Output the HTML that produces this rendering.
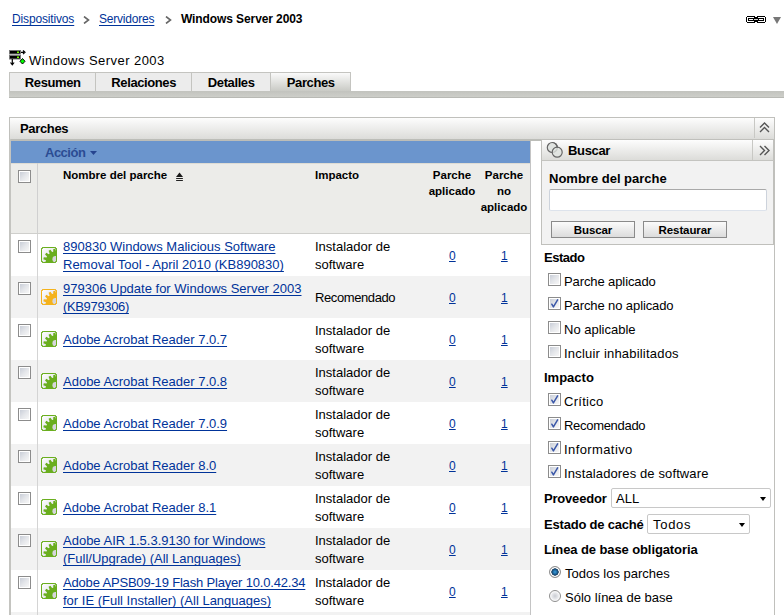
<!DOCTYPE html>
<html><head><meta charset="utf-8">
<style>
*{margin:0;padding:0;box-sizing:border-box}
html,body{width:784px;height:615px;overflow:hidden;background:#fff}
body{position:relative;font-family:"Liberation Sans",sans-serif;font-size:13px;color:#000}
.a{position:absolute}
.t{position:absolute;white-space:nowrap;line-height:18px}
.lnk{color:#003399;text-decoration:underline;text-underline-offset:2px;text-decoration-skip-ink:none}
.b{font-weight:bold}
/* tabs */
.tab{position:absolute;top:72px;height:19px;background:#ececec;border-top:1px solid #c4c4c0;border-right:1px solid #c4c4c0;font-weight:bold;text-align:center;line-height:18px;letter-spacing:-0.4px;padding-left:0.4px;padding-top:1px}
.cb{position:absolute;width:13px;height:13px;border:1px solid #8c8c8c;background:#fff}
.cb::before{content:"";position:absolute;left:1px;top:1px;width:9px;height:9px;background:linear-gradient(135deg,#c9ced8 0%,#e4e6ea 50%,#f7f7f7 100%)}
.cb svg{position:absolute;left:0;top:0}
.row{position:absolute;left:11px;width:519px;height:42px}
.row.g{background:#f2f2f2}
.row .cb{left:7px;top:6px}
.row .ic{position:absolute;left:30px;top:13px;width:16px;height:16px}
.row .nm{position:absolute;left:52px;width:260px;top:1px;height:42px;text-underline-offset:2px;text-decoration-skip-ink:none;display:flex;align-items:center;line-height:18px;color:#003399;text-decoration:underline}
.row .im{position:absolute;left:304px;width:100px;top:1px;height:42px;display:flex;align-items:center;line-height:18px}
.row .n0{position:absolute;left:438px;top:13px;text-underline-offset:1px;font-size:12px;line-height:18px;color:#003399;text-decoration:underline}
.row .n1{position:absolute;left:490px;top:13px;text-underline-offset:1px;font-size:12px;line-height:18px;color:#003399;text-decoration:underline}
.vline{position:absolute;left:26px;top:0;width:1px;height:42px;background:#d0d0d0}
.btn{position:absolute;height:17px;border:1px solid #8a8a8a;background:linear-gradient(#fbfbfb,#dcdcdc);font-weight:bold;font-size:11.5px;text-align:center;line-height:17px;letter-spacing:-0.1px}
.sel{position:absolute;height:20px;border:1px solid #c8c8c8;border-radius:2px;background:#fff;line-height:18px;padding-left:4px;padding-top:1px;font-size:13px}
.sel::after{content:"";position:absolute;right:4px;top:8px;border-left:3.5px solid transparent;border-right:3.5px solid transparent;border-top:4px solid #000}
.rad{position:absolute;width:12px;height:12px;border-radius:50%;border:1px solid #8e8e8e;background:radial-gradient(circle at 50% 50%,#c9ccd2 0,#e6e7ea 3px,#fff 5px)}
.rad.on{background:radial-gradient(circle at 50% 50%,#3ba0e0 0,#1a5c90 2.4px,#173a5a 3.4px,#fff 3.9px,#fff 4.5px,#c8c8c8 5px)}
</style></head><body>
<svg width="0" height="0" style="position:absolute">
<defs>
<linearGradient id="gw" x1="0" y1="0" x2="1" y2="1"><stop offset="0" stop-color="#fff"/><stop offset="1" stop-color="#d8d8e0"/></linearGradient>
<clipPath id="gclip"><rect x="1" y="1" width="14" height="14" rx="1.5"/></clipPath>
<symbol id="gear-g" viewBox="0 0 16 16"><rect x="0.5" y="0.5" width="15" height="15" rx="2" fill="url(#gw)" stroke="#6aae1e"/><g clip-path="url(#gclip)"><path d="M12.24 4.67 L12.30 1.90 L14.46 1.70 L15.03 4.41 L16.23 4.56 L17.42 2.05 L19.46 2.75 L18.88 5.46 L19.92 6.08 L22.03 4.27 L23.61 5.74 L21.98 7.98 L22.67 8.96 L25.33 8.17 L26.18 10.16 L23.78 11.54 L24.01 12.72 L26.77 13.08 L26.74 15.24 L23.98 15.53 L23.71 16.70 L26.08 18.15 L25.17 20.11 L22.54 19.25 L21.82 20.22 L23.39 22.50 L21.76 23.93 L19.71 22.07 L18.65 22.65 L19.16 25.38 L17.10 26.02 L15.98 23.49 L14.77 23.60 L14.13 26.29 L11.98 26.04 L11.99 23.27 L10.85 22.88 L9.16 25.08 L7.31 23.98 L8.44 21.44 L7.55 20.63 L5.12 21.95 L3.87 20.19 L5.93 18.33 L5.46 17.23 L2.69 17.45 L2.27 15.33 L4.91 14.48 L4.93 13.27 L2.31 12.35 L2.79 10.24 L5.55 10.53 L6.05 9.44 L4.04 7.53 L5.33 5.80 L7.73 7.19 L8.64 6.40 L7.57 3.84 L9.46 2.78 L11.08 5.03Z" fill="#6aae1e"/><circle cx="14.6" cy="12.2" r="3.2" fill="#d6d6dc"/></g><rect x="0.5" y="0.5" width="15" height="15" rx="2" fill="none" stroke="#6aae1e"/></symbol>
<symbol id="gear-y" viewBox="0 0 16 16"><rect x="0.5" y="0.5" width="15" height="15" rx="2" fill="url(#gw)" stroke="#f4b21c"/><g clip-path="url(#gclip)"><path d="M12.24 4.67 L12.30 1.90 L14.46 1.70 L15.03 4.41 L16.23 4.56 L17.42 2.05 L19.46 2.75 L18.88 5.46 L19.92 6.08 L22.03 4.27 L23.61 5.74 L21.98 7.98 L22.67 8.96 L25.33 8.17 L26.18 10.16 L23.78 11.54 L24.01 12.72 L26.77 13.08 L26.74 15.24 L23.98 15.53 L23.71 16.70 L26.08 18.15 L25.17 20.11 L22.54 19.25 L21.82 20.22 L23.39 22.50 L21.76 23.93 L19.71 22.07 L18.65 22.65 L19.16 25.38 L17.10 26.02 L15.98 23.49 L14.77 23.60 L14.13 26.29 L11.98 26.04 L11.99 23.27 L10.85 22.88 L9.16 25.08 L7.31 23.98 L8.44 21.44 L7.55 20.63 L5.12 21.95 L3.87 20.19 L5.93 18.33 L5.46 17.23 L2.69 17.45 L2.27 15.33 L4.91 14.48 L4.93 13.27 L2.31 12.35 L2.79 10.24 L5.55 10.53 L6.05 9.44 L4.04 7.53 L5.33 5.80 L7.73 7.19 L8.64 6.40 L7.57 3.84 L9.46 2.78 L11.08 5.03Z" fill="#f4b21c"/><circle cx="14.6" cy="12.2" r="3.2" fill="#d6d6dc"/></g><rect x="0.5" y="0.5" width="15" height="15" rx="2" fill="none" stroke="#f4b21c"/></symbol>
</defs></svg>

<!-- breadcrumb -->
<div class="t lnk" style="left:12px;top:10px;font-size:12px;letter-spacing:-0.15px">Dispositivos</div>
<svg class="a" style="left:83px;top:16px" width="7" height="8" viewBox="0 0 7 8"><path d="M1 0.5L5.5 4L1 7.5" fill="none" stroke="#666" stroke-width="1.6"/></svg>
<div class="t lnk" style="left:99px;top:10px;font-size:12px;letter-spacing:-0.2px">Servidores</div>
<svg class="a" style="left:165px;top:16px" width="7" height="8" viewBox="0 0 7 8"><path d="M1 0.5L5.5 4L1 7.5" fill="none" stroke="#666" stroke-width="1.6"/></svg>
<div class="t b" style="left:181px;top:10px;font-size:12px;letter-spacing:-0.1px">Windows Server 2003</div>

<!-- link icon -->
<svg class="a" style="left:745px;top:15px" width="22" height="9" viewBox="0 0 22 9" shape-rendering="crispEdges" fill="#000"><rect x="2" y="1" width="1" height="1"/><rect x="3" y="1" width="1" height="1"/><rect x="4" y="1" width="1" height="1"/><rect x="5" y="1" width="1" height="1"/><rect x="6" y="1" width="1" height="1"/><rect x="7" y="1" width="1" height="1"/><rect x="8" y="1" width="1" height="1"/><rect x="9" y="1" width="1" height="1"/><rect x="12" y="1" width="1" height="1"/><rect x="13" y="1" width="1" height="1"/><rect x="14" y="1" width="1" height="1"/><rect x="15" y="1" width="1" height="1"/><rect x="16" y="1" width="1" height="1"/><rect x="17" y="1" width="1" height="1"/><rect x="18" y="1" width="1" height="1"/><rect x="19" y="1" width="1" height="1"/><rect x="1" y="2" width="1" height="1"/><rect x="9" y="2" width="1" height="1"/><rect x="10" y="2" width="1" height="1"/><rect x="11" y="2" width="1" height="1"/><rect x="12" y="2" width="1" height="1"/><rect x="20" y="2" width="1" height="1"/><rect x="1" y="3" width="1" height="1"/><rect x="3" y="3" width="1" height="1"/><rect x="4" y="3" width="1" height="1"/><rect x="5" y="3" width="1" height="1"/><rect x="6" y="3" width="1" height="1"/><rect x="7" y="3" width="1" height="1"/><rect x="8" y="3" width="1" height="1"/><rect x="9" y="3" width="1" height="1"/><rect x="10" y="3" width="1" height="1"/><rect x="11" y="3" width="1" height="1"/><rect x="12" y="3" width="1" height="1"/><rect x="13" y="3" width="1" height="1"/><rect x="14" y="3" width="1" height="1"/><rect x="15" y="3" width="1" height="1"/><rect x="16" y="3" width="1" height="1"/><rect x="17" y="3" width="1" height="1"/><rect x="18" y="3" width="1" height="1"/><rect x="20" y="3" width="1" height="1"/><rect x="1" y="4" width="1" height="1"/><rect x="3" y="4" width="1" height="1"/><rect x="8" y="4" width="1" height="1"/><rect x="9" y="4" width="1" height="1"/><rect x="10" y="4" width="1" height="1"/><rect x="11" y="4" width="1" height="1"/><rect x="12" y="4" width="1" height="1"/><rect x="13" y="4" width="1" height="1"/><rect x="18" y="4" width="1" height="1"/><rect x="20" y="4" width="1" height="1"/><rect x="1" y="5" width="1" height="1"/><rect x="3" y="5" width="1" height="1"/><rect x="4" y="5" width="1" height="1"/><rect x="5" y="5" width="1" height="1"/><rect x="6" y="5" width="1" height="1"/><rect x="7" y="5" width="1" height="1"/><rect x="8" y="5" width="1" height="1"/><rect x="9" y="5" width="1" height="1"/><rect x="10" y="5" width="1" height="1"/><rect x="11" y="5" width="1" height="1"/><rect x="12" y="5" width="1" height="1"/><rect x="13" y="5" width="1" height="1"/><rect x="14" y="5" width="1" height="1"/><rect x="15" y="5" width="1" height="1"/><rect x="16" y="5" width="1" height="1"/><rect x="17" y="5" width="1" height="1"/><rect x="18" y="5" width="1" height="1"/><rect x="20" y="5" width="1" height="1"/><rect x="1" y="6" width="1" height="1"/><rect x="9" y="6" width="1" height="1"/><rect x="10" y="6" width="1" height="1"/><rect x="11" y="6" width="1" height="1"/><rect x="12" y="6" width="1" height="1"/><rect x="20" y="6" width="1" height="1"/><rect x="2" y="7" width="1" height="1"/><rect x="3" y="7" width="1" height="1"/><rect x="4" y="7" width="1" height="1"/><rect x="5" y="7" width="1" height="1"/><rect x="6" y="7" width="1" height="1"/><rect x="7" y="7" width="1" height="1"/><rect x="8" y="7" width="1" height="1"/><rect x="9" y="7" width="1" height="1"/><rect x="12" y="7" width="1" height="1"/><rect x="13" y="7" width="1" height="1"/><rect x="14" y="7" width="1" height="1"/><rect x="15" y="7" width="1" height="1"/><rect x="16" y="7" width="1" height="1"/><rect x="17" y="7" width="1" height="1"/><rect x="18" y="7" width="1" height="1"/><rect x="19" y="7" width="1" height="1"/><rect x="9" y="4" width="4" height="1" fill="#ccc"/></svg>
<svg class="a" style="left:773px;top:17px" width="8" height="7" viewBox="0 0 8 7"><path d="M0 0H8L4 7Z" fill="#777"/></svg>

<!-- title -->
<svg class="a" style="left:8px;top:49px" width="18" height="17" viewBox="0 0 18 17">
<rect x="1.5" y="1.5" width="11" height="3.5" fill="#000" stroke="#777" stroke-width="1"/>
<rect x="1.5" y="6.5" width="11" height="3.5" fill="#000" stroke="#777" stroke-width="1"/>
<rect x="9" y="2.5" width="2" height="1.5" fill="#7f0"/>
<rect x="9" y="7.5" width="2" height="1.5" fill="#7f0"/>
<path d="M13 3.3H16M15 1.5L17 3.3L15 5.1" stroke="#000" fill="none" stroke-width="1.2"/>
<path d="M4.3 10V15.5M2.5 13.5L4.3 15.8L6.1 13.5" stroke="#000" fill="none" stroke-width="1.2"/>
<path d="M14.5 9.5L17 12.3L14.5 15L12 12.3Z" fill="#0f0" stroke="#000" stroke-width="1"/>
</svg>
<div class="t" style="left:29px;top:52px;font-size:13px;letter-spacing:0.45px">Windows Server 2003</div>

<!-- tabs -->
<div class="tab" style="left:9px;width:87px;border-left:1px solid #c4c4c0">Resumen</div>
<div class="tab" style="left:96px;width:96px">Relaciones</div>
<div class="tab" style="left:192px;width:79px">Detalles</div>
<div class="tab" style="left:271px;width:80px;background:linear-gradient(#fafafa,#c9cac5)">Parches</div>
<div class="a" style="left:9px;top:91px;width:775px;height:7px;background:linear-gradient(#c2c3be,#cdcec9);border-bottom:1px solid #b8b9b4"></div>

<!-- Parches panel header -->
<div class="a" style="left:9px;top:117px;width:766px;height:24px;border:1px solid #c0c0bc;border-bottom:2px solid #bcbdb8;background:linear-gradient(#fdfdfd,#dcdcd9)"></div>
<div class="t b" style="left:20px;top:120px;letter-spacing:-0.35px">Parches</div>
<div class="a" style="left:754px;top:118px;width:1px;height:20px;background:#c8c8c4"></div>
<svg class="a" style="left:759px;top:122px" width="11" height="11" viewBox="0 0 11 11"><path d="M1 5.5L5.5 1L10 5.5M1 10L5.5 5.5L10 10" fill="none" stroke="#555" stroke-width="1.4"/></svg>
<!-- panel left border -->
<div class="a" style="left:9px;top:139px;width:2px;height:476px;background:#c4c4c0"></div>
<div class="a" style="left:774px;top:139px;width:1px;height:476px;background:#c0c0bc"></div>

<!-- action bar -->
<div class="a" style="left:11px;top:141px;width:519px;height:22px;background:#6b95cd"></div>
<div class="t b" style="left:45px;top:144px;color:#2b4c93;letter-spacing:-0.5px">Acción</div>
<svg class="a" style="left:90px;top:151px" width="7" height="4" viewBox="0 0 7 4"><path d="M0 0H7L3.5 4Z" fill="#26448f"/></svg>

<!-- header row -->
<div class="a" style="left:11px;top:163px;width:519px;height:71px;background:#ecece9;border-top:1px solid #dedcd4;border-bottom:1px solid #cfcfcc"></div>
<div class="a" style="left:37px;top:163px;width:1px;height:70px;background:#d0d0d0"></div>
<div class="cb" style="left:18px;top:170px"></div>
<div class="t b" style="left:63px;top:167px;font-size:11.5px;line-height:16px">Nombre del parche</div>
<svg class="a" style="left:176px;top:172px" width="7" height="9" viewBox="0 0 7 9"><path d="M3.5 0.5L7 5H0Z" fill="#1a1a1a"/><rect x="0" y="6" width="7" height="1" rx="0.5" fill="#222"/><rect x="0" y="8" width="7" height="1" rx="0.5" fill="#222"/></svg>
<div class="t b" style="left:315px;top:167px;font-size:11.5px;line-height:16px">Impacto</div>
<div class="t b" style="left:420px;top:167px;font-size:11.5px;line-height:16px;text-align:center;width:64px">Parche<br>aplicado</div>
<div class="t b" style="left:477px;top:167px;font-size:11.5px;line-height:16px;text-align:center;width:54px">Parche<br>no<br>aplicado</div>

<!-- rows -->
<div class="row" style="top:234px"><div class="cb"></div><svg class="ic" viewBox="0 0 16 16"><use href="#gear-g"/></svg><div class="nm"><span>890830 Windows Malicious Software<br>Removal Tool - April 2010 (KB890830)</span></div><div class="im"><span>Instalador de<br>software</span></div><div class="n0">0</div><div class="n1">1</div></div>
<div class="row g" style="top:276px"><div class="cb"></div><svg class="ic" viewBox="0 0 16 16"><use href="#gear-y"/></svg><div class="nm"><span>979306 Update for Windows Server 2003<br><span style="letter-spacing:-0.35px">(KB979306)</span></span></div><div class="im"><span style="letter-spacing:-0.4px">Recomendado</span></div><div class="n0">0</div><div class="n1">1</div></div>
<div class="row" style="top:318px"><div class="cb"></div><svg class="ic" viewBox="0 0 16 16"><use href="#gear-g"/></svg><div class="nm"><span>Adobe Acrobat Reader 7.0.7</span></div><div class="im"><span>Instalador de<br>software</span></div><div class="n0">0</div><div class="n1">1</div></div>
<div class="row g" style="top:360px"><div class="cb"></div><svg class="ic" viewBox="0 0 16 16"><use href="#gear-g"/></svg><div class="nm"><span>Adobe Acrobat Reader 7.0.8</span></div><div class="im"><span>Instalador de<br>software</span></div><div class="n0">0</div><div class="n1">1</div></div>
<div class="row" style="top:402px"><div class="cb"></div><svg class="ic" viewBox="0 0 16 16"><use href="#gear-g"/></svg><div class="nm"><span>Adobe Acrobat Reader 7.0.9</span></div><div class="im"><span>Instalador de<br>software</span></div><div class="n0">0</div><div class="n1">1</div></div>
<div class="row g" style="top:444px"><div class="cb"></div><svg class="ic" viewBox="0 0 16 16"><use href="#gear-g"/></svg><div class="nm"><span>Adobe Acrobat Reader 8.0</span></div><div class="im"><span>Instalador de<br>software</span></div><div class="n0">0</div><div class="n1">1</div></div>
<div class="row" style="top:486px"><div class="cb"></div><svg class="ic" viewBox="0 0 16 16"><use href="#gear-g"/></svg><div class="nm"><span>Adobe Acrobat Reader 8.1</span></div><div class="im"><span>Instalador de<br>software</span></div><div class="n0">0</div><div class="n1">1</div></div>
<div class="row g" style="top:528px"><div class="cb"></div><svg class="ic" viewBox="0 0 16 16"><use href="#gear-g"/></svg><div class="nm"><span>Adobe AIR 1.5.3.9130 for Windows<br>(Full/Upgrade) (All Languages)</span></div><div class="im"><span>Instalador de<br>software</span></div><div class="n0">0</div><div class="n1">1</div></div>
<div class="row" style="top:570px"><div class="cb"></div><svg class="ic" viewBox="0 0 16 16"><use href="#gear-g"/></svg><div class="nm"><span><span style="letter-spacing:-0.18px">Adobe APSB09-19 Flash Player 10.0.42.34</span><br>for IE (Full Installer) (All Languages)</span></div><div class="im"><span>Instalador de<br>software</span></div><div class="n0">0</div><div class="n1">1</div></div>
<div class="row g" style="top:612px"></div>
<div class="a" style="left:530px;top:141px;width:1px;height:474px;background:#c4c4c4"></div>
<div class="a" style="left:37px;top:234px;width:1px;height:381px;background:#d4d4d4"></div>

<!-- Buscar panel -->
<div class="a" style="left:541px;top:139px;width:233px;height:106px;background:#f2f2f2;border:1px solid #c0c0bc"></div>
<div class="a" style="left:541px;top:139px;width:233px;height:22px;border:1px solid #c0c0bc;border-bottom:1px solid #c4c4c0;background:linear-gradient(#fdfdfd,#dcdcd9)"></div>
<div class="a" style="left:752px;top:140px;width:1px;height:20px;background:#c8c8c4"></div>
<svg class="a" style="left:759px;top:145px" width="11" height="11" viewBox="0 0 11 11"><path d="M1 1L5.5 5.5L1 10M5.5 1L10 5.5L5.5 10" fill="none" stroke="#555" stroke-width="1.4"/></svg>
<svg class="a" style="left:546px;top:141px" width="18" height="18" viewBox="0 0 18 18"><circle cx="6.3" cy="6.5" r="5" fill="#e0e3e0" stroke="#666" stroke-width="1.2"/><circle cx="11.2" cy="11.2" r="5" fill="#e0e3e0" fill-opacity="0.8" stroke="#666" stroke-width="1.2"/><path d="M6.3 1.5A5 5 0 0 1 11.3 6.5" fill="none" stroke="#666" stroke-width="1.2"/></svg>
<div class="t b" style="left:568px;top:142px;letter-spacing:-0.35px">Buscar</div>
<div class="t b" style="left:549px;top:170px;font-size:13px">Nombre del parche</div>
<div class="a" style="left:549px;top:189px;width:218px;height:22px;background:#fff;border:1px solid #cdd3dc;border-top-color:#a9a9a9;border-bottom-color:#dde3ec;border-radius:2px"></div>
<div class="btn" style="left:551px;top:221px;width:84px">Buscar</div>
<div class="btn" style="left:643px;top:221px;width:84px">Restaurar</div>

<!-- filters -->
<div class="t b" style="left:544px;top:249px;letter-spacing:-0.5px">Estado</div>
<div class="cb" style="left:548px;top:273px"></div><div class="t" style="left:564px;top:273px;letter-spacing:-0.1px">Parche aplicado</div>
<div class="cb" style="left:548px;top:297px"><svg width="11" height="11" viewBox="0 0 11 11"><path d="M2.8 6.2L4.4 8.9L8.6 1.9" fill="none" stroke="#3a57a8" stroke-width="1.5" stroke-linecap="round" stroke-linejoin="round"/></svg></div><div class="t" style="left:564px;top:297px;letter-spacing:-0.1px">Parche no aplicado</div>
<div class="cb" style="left:548px;top:321px"></div><div class="t" style="left:564px;top:321px">No aplicable</div>
<div class="cb" style="left:548px;top:345px"></div><div class="t" style="left:564px;top:345px;letter-spacing:0.2px">Incluir inhabilitados</div>
<div class="t b" style="left:544px;top:369px">Impacto</div>
<div class="cb" style="left:548px;top:393px"><svg width="11" height="11" viewBox="0 0 11 11"><path d="M2.8 6.2L4.4 8.9L8.6 1.9" fill="none" stroke="#3a57a8" stroke-width="1.5" stroke-linecap="round" stroke-linejoin="round"/></svg></div><div class="t" style="left:564px;top:393px;letter-spacing:0.28px">Crítico</div>
<div class="cb" style="left:548px;top:417px"><svg width="11" height="11" viewBox="0 0 11 11"><path d="M2.8 6.2L4.4 8.9L8.6 1.9" fill="none" stroke="#3a57a8" stroke-width="1.5" stroke-linecap="round" stroke-linejoin="round"/></svg></div><div class="t" style="left:564px;top:417px;letter-spacing:-0.3px">Recomendado</div>
<div class="cb" style="left:548px;top:441px"><svg width="11" height="11" viewBox="0 0 11 11"><path d="M2.8 6.2L4.4 8.9L8.6 1.9" fill="none" stroke="#3a57a8" stroke-width="1.5" stroke-linecap="round" stroke-linejoin="round"/></svg></div><div class="t" style="left:564px;top:441px;letter-spacing:0.4px">Informativo</div>
<div class="cb" style="left:548px;top:465px"><svg width="11" height="11" viewBox="0 0 11 11"><path d="M2.8 6.2L4.4 8.9L8.6 1.9" fill="none" stroke="#3a57a8" stroke-width="1.5" stroke-linecap="round" stroke-linejoin="round"/></svg></div><div class="t" style="left:564px;top:465px;letter-spacing:0.12px">Instaladores de software</div>
<div class="t b" style="left:544px;top:490px;letter-spacing:-0.2px">Proveedor</div>
<div class="sel" style="left:611px;top:488px;width:160px">ALL</div>
<div class="t b" style="left:544px;top:516px;letter-spacing:-0.2px">Estado de caché</div>
<div class="sel" style="left:647px;top:514px;width:103px;padding-left:5px;letter-spacing:0.7px">Todos</div>
<div class="t b" style="left:544px;top:541px;letter-spacing:-0.1px">Línea de base obligatoria</div>
<div class="rad on" style="left:549px;top:566px"></div><div class="t" style="left:565px;top:565px">Todos los parches</div>
<div class="rad" style="left:549px;top:590px"></div><div class="t" style="left:565px;top:589px">Sólo línea de base</div>

</body></html>
